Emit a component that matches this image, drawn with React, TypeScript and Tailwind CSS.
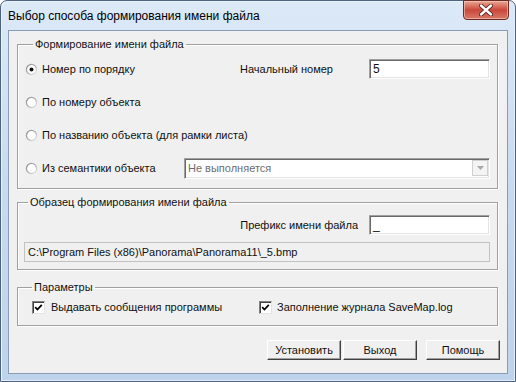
import * as React from 'react';

const Radio: React.FC<{ checked?: boolean }> = ({ checked }) => (
    <svg width="13" height="13" viewBox="0 0 13 13" className="shrink-0">
        <defs>
            <linearGradient id="rg" x1="0" y1="0" x2="1" y2="1">
                <stop offset="0" stopColor="#8a8a8a" />
                <stop offset="0.55" stopColor="#b8b8b8" />
                <stop offset="1" stopColor="#f4f4f4" />
            </linearGradient>
        </defs>
        <circle cx="6.5" cy="6.5" r="5.7" fill="url(#rg)" />
        <circle cx="6.5" cy="6.5" r="4.4" fill="#fff" />
        {checked && <circle cx="6.5" cy="6.5" r="2" fill="#111" />}
    </svg>
);

const Check: React.FC = () => (
    <span className="w-[13px] h-[13px] shrink-0 bg-white border border-t-[#808080] border-l-[#808080] border-b-[#e3e3e3] border-r-[#e3e3e3] shadow-[inset_1px_1px_0_#404040] flex items-center justify-center">
        <svg width="9" height="9" viewBox="0 0 9 9">
            <path d="M1.2 4.2 L3.4 6.5 L7.8 1.8" stroke="#000" strokeWidth="1.8" fill="none" />
        </svg>
    </span>
);

const Group: React.FC<{ title: string; className?: string; legendClass?: string; children: React.ReactNode }> = ({ title, className, legendClass, children }) => (
    <fieldset className={`w-[481px] ml-[8px] border border-[#a0a0a0] shadow-[inset_1px_1px_0_#fff,1px_1px_0_#fff] ${className ?? ''}`}>
        <legend className={`px-[2px] leading-[13px] ${legendClass ?? 'ml-[8px]'}`}>{title}</legend>
        {children}
    </fieldset>
);

const sunken = 'border border-t-[#a0a0a0] border-l-[#a0a0a0] border-b-white border-r-white shadow-[inset_1px_1px_0_#696969,inset_-1px_-1px_0_#e3e3e3]';

const Button: React.FC<{ label: string; className?: string }> = ({ label, className }) => (
    <button className={`w-[74px] h-[20px] bg-[#f0f0f0] border border-t-white border-l-white border-b-[#404040] border-r-[#404040] shadow-[inset_-1px_-1px_0_#a0a0a0] ${className ?? ''}`}>
        {label}
    </button>
);

const App: React.FC = () => {
    return (
        <div className="w-[516px] h-[382px] bg-white">
            <div className="w-[516px] h-[382px] flex flex-col rounded-t-[7px] border border-[#4d6380] bg-gradient-to-b from-[#dce9f7] via-[#c7daf0] to-[#bed3ec] shadow-[inset_1px_1px_0_#eaf2fb,inset_-1px_-1px_0_#e4eef9] font-['Liberation_Sans',Arial,sans-serif]">
                <div className="h-[29px] flex items-start relative">
                    <span className="text-[12px] text-black ml-[7px] mt-[8px] leading-[14px]">Выбор способа формирования имени файла</span>
                    <div className="absolute right-[6px] top-[-1px] w-[46px] h-[20px] rounded-b-[4px] border border-[#6b2a24] bg-gradient-to-b from-[#e9a593] via-[#c9473b] to-[#d77868] shadow-[inset_0_0_0_1px_rgba(255,220,210,0.5)] flex items-center justify-center">
                        <svg width="14" height="12" viewBox="0 0 14 12">
                            <path d="M2 1.5 L12 10.5 M12 1.5 L2 10.5" stroke="#4a1a14" strokeWidth="4" strokeLinecap="round" />
                            <path d="M2 1.5 L12 10.5 M12 1.5 L2 10.5" stroke="#fff" strokeWidth="2.4" strokeLinecap="round" />
                        </svg>
                    </div>
                </div>
                <div className="mx-[7px] mb-[7px] flex-1 bg-[#f0f0f0] border border-[#8a9cb3] text-[11px] text-[#111] pt-[7px] flex flex-col">
                    <Group title="Формирование имени файла" className="pl-[7px] pr-[7px] pt-[8px] pb-[10px]">
                        <div className="flex flex-col gap-[13px]">
                            <div className="flex items-center h-[20px]">
                                <div className="w-[215px] flex items-center gap-[4px]">
                                    <Radio checked />
                                    <span>Номер по порядку</span>
                                </div>
                                <span>Начальный номер</span>
                                <div className={`ml-auto w-[121px] h-[20px] bg-white ${sunken} flex items-center pl-[3px] text-[12px]`}>5</div>
                            </div>
                            <div className="flex items-center h-[20px] gap-[4px]">
                                <Radio />
                                <span>По номеру объекта</span>
                            </div>
                            <div className="flex items-center h-[20px] gap-[4px]">
                                <Radio />
                                <span>По названию объекта (для рамки листа)</span>
                            </div>
                            <div className="flex items-center h-[20px]">
                                <div className="w-[159px] flex items-center gap-[4px]">
                                    <Radio />
                                    <span>Из семантики объекта</span>
                                </div>
                                <div className={`flex-1 h-[21px] bg-white ${sunken} flex items-center pl-[3px] text-[#6d6d6d]`}>
                                    <span className="flex-1">Не выполняется</span>
                                    <span className="w-[16px] h-[16px] mr-[1px] bg-[#f4f4f4] border border-[#d0d0d0] flex items-center justify-center">
                                        <svg width="7" height="4" viewBox="0 0 7 4">
                                            <path d="M0 0 L7 0 L3.5 4 Z" fill="#a8a8a8" />
                                        </svg>
                                    </span>
                                </div>
                            </div>
                        </div>
                    </Group>
                    <Group title="Образец формирования имени файла" legendClass="ml-[4px]" className="mt-[7px] pl-[6px] pr-[7px] pt-[6px] pb-[7px]">
                        <div className="flex items-center justify-end h-[20px] gap-[11px]">
                            <span>Префикс имени файла</span>
                            <div className={`w-[121px] h-[20px] bg-white ${sunken} flex items-center pl-[3px] text-[12px]`}>_</div>
                        </div>
                        <div className="mt-[7px] h-[20px] border border-[#c2c2c2] flex items-center pl-[3px]">
                            C:\Program Files (x86)\Panorama\Panorama11\_5.bmp
                        </div>
                    </Group>
                    <Group title="Параметры" className="mt-[11px] pl-[6px] pt-[6px] pb-[11px]">
                        <div className="flex items-center h-[14px]">
                            <div className="w-[235px] flex items-center gap-[6px] pl-[8px]">
                                <Check />
                                <span>Выдавать сообщения программы</span>
                            </div>
                            <div className="flex items-center gap-[5px]">
                                <Check />
                                <span>Заполнение журнала SaveMap.log</span>
                            </div>
                        </div>
                    </Group>
                    <div className="flex justify-end mt-[14px] pr-[7px]">
                        <Button label="Установить" />
                        <Button label="Выход" className="ml-[2px]" />
                        <Button label="Помощь" className="ml-[9px]" />
                    </div>
                </div>
            </div>
        </div>
    );
};

export default App;
